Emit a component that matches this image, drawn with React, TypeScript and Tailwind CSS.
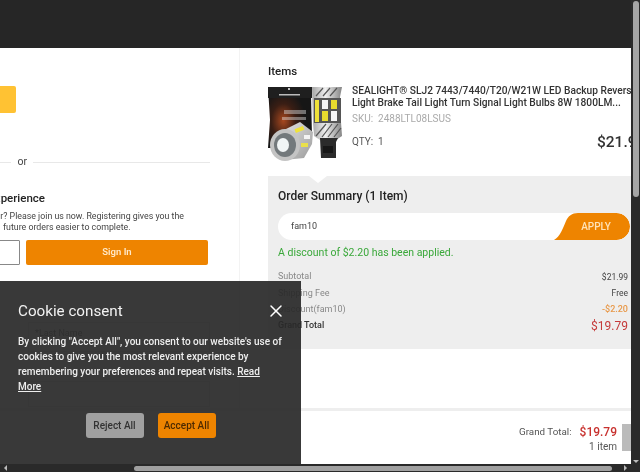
import { X } from "lucide-react";

const F = "font-['Roboto','Noto_Sans',sans-serif]";

function ProductImage() {
  return (
    <svg viewBox="0 0 76 76" className="h-[76px] w-[76px] shrink-0 blur-[0.5px]">
      <defs>
        <linearGradient id="g1" x1="0" y1="0" x2="1" y2="0">
          <stop offset="0" stopColor="#a5a5a5" />
          <stop offset="0.45" stopColor="#efefef" />
          <stop offset="1" stopColor="#858585" />
        </linearGradient>
        <radialGradient id="g2" cx="0.35" cy="0.55" r="0.5">
          <stop offset="0" stopColor="#a8481f" />
          <stop offset="0.55" stopColor="#3a1e14" />
          <stop offset="1" stopColor="#161616" />
        </radialGradient>
        <linearGradient id="g3" x1="0" y1="0" x2="1" y2="1">
          <stop offset="0" stopColor="#e8e8e8" />
          <stop offset="1" stopColor="#9a9a9a" />
        </linearGradient>
      </defs>
      <path d="M0 1 H44 L43 9 L44 50 L4 62 L0 62 L2 34 Z" fill="url(#g2)" />
      <rect x="0" y="1" width="44" height="11" fill="#1f1f1f" />
      <circle cx="21" cy="3" r="1" fill="#fff" />
      <rect x="11" y="8" width="21" height="1.5" fill="#bbb" />
      <rect x="16" y="24" width="22" height="4" fill="#ddd" opacity="0.45" />
      <rect x="14" y="31" width="24" height="3" fill="#ddd" opacity="0.45" />
      <path d="M44 1 H74 L72 11 L73 36 L74 50 L68 54 H52 L46 50 L45 36 Z" fill="url(#g1)" />
      <rect x="46" y="12" width="27" height="25" fill="#555" />
      <rect x="47" y="14" width="4" height="22" fill="#efe23a" />
      <rect x="54" y="14" width="6" height="9" fill="#f4f4f4" />
      <rect x="54" y="25" width="6" height="10" fill="#e8db2e" />
      <rect x="63" y="14" width="6" height="9" fill="#e8db2e" />
      <rect x="63" y="25" width="6" height="10" fill="#f6f6f6" />
      <g stroke="#555" strokeWidth="1.2">
        <path d="M48 50 L58 38" />
        <path d="M54 51 L64 38" />
        <path d="M60 51 L70 38" />
        <path d="M66 51 L73 42" />
        <path d="M48 10 L55 2" />
        <path d="M55 10 L62 2" />
        <path d="M62 10 L69 2" />
      </g>
      <path d="M52 52 H70 L68 56 V72 H53 Z" fill="#2b2b2b" />
      <rect x="55" y="60" width="10" height="7" fill="#171717" />
      <path d="M10 47 L32 36 L45 46 L44 58 L36 72 L16 74 Z" fill="url(#g3)" />
      <rect x="27" y="42" width="9" height="4" fill="#f0e33a" transform="rotate(-20 30 44)" />
      <rect x="36" y="49" width="6" height="4" fill="#f3f3f3" />
      <rect x="33" y="57" width="7" height="4" fill="#e9e04a" />
      <ellipse cx="17" cy="59" rx="15" ry="16" fill="#c4c4c4" />
      <ellipse cx="17" cy="59" rx="11" ry="12" fill="#73797c" />
      <ellipse cx="15" cy="59" rx="6" ry="7" fill="#f1f5f6" />
    </svg>
  );
}

function Row({ label, value, labelCls, valueCls }: { label: string; value: string; labelCls: string; valueCls: string }) {
  return (
    <div className="flex h-[16.3px] items-center justify-between pr-[2px]">
      <span className={labelCls}>{label}</span>
      <span className={valueCls}>{value}</span>
    </div>
  );
}

export default function App() {
  return (
    <div className={`relative flex h-[472px] w-[640px] flex-col overflow-hidden bg-white blur-[0.3px] ${F}`}>
      <div className="flex min-h-0 flex-1">
        <div className="flex w-[631px] flex-col overflow-hidden">
          <header className="h-12 shrink-0 bg-[#262626]" />
          <main className="flex h-[360px] shrink-0">
            <section className="w-[240px] shrink-0 overflow-hidden border-r border-[#f3f3f3]">
              <div className="ml-[-200px] w-[410px]">
                <div className="mt-[38px] h-[27px] w-[216px] rounded-[2px] bg-[#ffc233]" />
                <div className="mt-[42px] flex items-center gap-[6px]">
                  <div className="h-px flex-1 bg-[#e8e8e8]" />
                  <span className="text-[10.5px] leading-[14px] text-[#444]">or</span>
                  <div className="h-px w-[177px] bg-[#e8e8e8]" />
                </div>
                <h3 className="mt-[22px] w-[245px] text-right text-[11.5px] leading-[14px] font-medium text-[#222]">Create an account for a better experience</h3>
                <p className="mt-[6px] pr-[26px] text-right text-[8.8px] leading-[11px] text-[#444]">
                  New customer? Please join us now. Registering gives you the
                </p>
                <p className="pl-[203px] text-[8.8px] leading-[11px] text-[#444]">future orders easier to complete.</p>
                <div className="mt-[7px] flex gap-[6px] pr-[2px]">
                  <button className="h-[25px] flex-1 rounded-[1px] border border-[#888] bg-white" />
                  <button className="h-[25px] w-[182px] rounded-[2px] bg-[#ee8400] text-[9.5px] font-semibold text-[#ffe9c8]">Sign In</button>
                </div>
                <div className="mt-[57px] ml-[228px] h-[30px] w-[182px] border border-[#ddd] pt-[4px] pl-[6px] text-[9px] text-[#777]">*Last Name</div>
                <div className="mt-[29px] ml-[228px] h-[26px] w-[182px] border border-[#ddd]" />
              </div>
            </section>
            <section className="min-w-0 flex-1 pl-[28px]">
              <h2 className="mt-[16px] text-[11.5px] leading-[14px] font-medium text-[#222]">Items</h2>
              <div className="mt-[8px] flex gap-[8px]">
                <ProductImage />
                <div className="min-w-0 flex-1">
                  <div className="mt-[-1px] w-[300px] text-[10.2px] leading-[12.3px] font-medium text-[#333]">
                    <div className="whitespace-nowrap">SEALIGHT® SLJ2 7443/7440/T20/W21W LED Backup Reverse</div>
                    <div className="whitespace-nowrap">Light Brake Tail Light Turn Signal Light Bulbs 8W 1800LM...</div>
                  </div>
                  <div className="mt-[2px] text-[10px] leading-[13px] text-[#aaa]">SKU:&nbsp; 2488LTL08LSUS</div>
                  <div className="mt-[8px] flex items-center justify-between">
                    <span className="text-[10px] text-[#555]">QTY:&nbsp;&nbsp;1</span>
                    <span className="mr-[-12px] w-[46px] overflow-hidden text-[15.5px] leading-[18px] font-medium whitespace-nowrap text-[#333]">$21.99</span>
                  </div>
                </div>
              </div>
              <div className="relative mt-[14px] h-[173px] w-[363px] bg-[#eeeeee] pt-[13px] pr-px pl-[10px]">
                <div className="absolute top-0 left-[41px] h-0 w-0 border-x-[9px] border-t-[7px] border-x-transparent border-t-white" />
                <h2 className="text-[12px] leading-[15px] font-medium text-[#222]">Order Summary (1 Item)</h2>
                <div className="mt-[9px] flex h-[27px] w-[352px] items-center overflow-hidden rounded-full bg-white">
                  <span className="flex-1 pl-[13px] text-[9px] text-[#444]">fam10</span>
                  <svg viewBox="0 0 76 27" className="h-[27px] w-[76px]">
                    <path d="M0 27 C6 24 9 15 12 8 C14 3 18 0 24 0 H62.5 A13.5 13.5 0 0 1 62.5 27 Z" fill="#ee8400" />
                    <text x="42" y="17" textAnchor="middle" fontSize="10" fontWeight="500" fill="#ffe3b8">APPLY</text>
                  </svg>
                </div>
                <div className="mt-[6px] text-[10.5px] leading-[13px] text-[#3aa83a]">A discount of $2.20 has been applied.</div>
                <div className="mt-[10px]">
                  <Row label="Subtotal" value="$21.99" labelCls="text-[9px] text-[#888]" valueCls="text-[8.5px] text-[#444]" />
                  <Row label="Shipping Fee" value="Free" labelCls="text-[9px] text-[#888]" valueCls="text-[8.5px] text-[#444]" />
                  <Row label="Discount(fam10)" value="-$2.20" labelCls="text-[9px] text-[#888]" valueCls="text-[9px] font-medium text-[#e8994a]" />
                  <Row label="Grand Total" value="$19.79" labelCls="text-[9px] font-medium text-[#333]" valueCls="text-[12px] text-[#c53a3a]" />
                </div>
              </div>
            </section>
          </main>
          <footer className="flex h-[56px] shrink-0 items-start justify-end border-t-[3px] border-[#eeeeee] pt-[13px]">
            <div className="flex flex-col items-end">
              <div className="flex items-center gap-[8px]">
                <span className="text-[9.8px] text-[#555]">Grand Total:</span>
                <span className="text-[12px] leading-[16px] font-medium text-[#c8322f]">$19.79</span>
              </div>
              <span className="text-[10px] leading-[13px] text-[#555]">1 item</span>
            </div>
            <div className="ml-[5px] h-[27px] w-[9px] bg-[#bbbbbb]" />
          </footer>
        </div>
        <div className="flex w-[9px] shrink-0 flex-col items-center bg-[#2a2a2a]">
          <div className="mt-[1px] h-[196px] w-[6px] rounded-[3px] bg-[#a5a5a5]" />
          <div className="mt-auto mb-[1px] h-0 w-0 border-x-[3px] border-t-[3px] border-x-transparent border-t-[#bbb]" />
        </div>
      </div>
      <div className="flex h-[8px] shrink-0 items-center bg-[#2a2a2a] pl-[4px]">
        <div className="h-0 w-0 border-y-[3px] border-r-[3px] border-y-transparent border-r-[#bbb]" />
        <div className="ml-[127px] h-[5px] w-[478px] rounded-[3px] bg-[#a0a0a0]" />
        <div className="ml-[12px] h-0 w-0 border-y-[3px] border-l-[3px] border-y-transparent border-l-[#bbb]" />
      </div>

      <div className="absolute top-[281px] left-0 h-[183px] w-[301px] bg-[#282828]/92 px-[18px] pt-[20px]">
        <div className="flex items-center justify-between">
          <h2 className="text-[15.2px] leading-[20px] text-[#f2f2f2]">Cookie consent</h2>
          <X className="mr-[-3px] h-[20px] w-[20px] text-white" strokeWidth={1.8} />
        </div>
        <p className="mt-[13px] w-[265px] text-[10px] leading-[15px] font-medium text-[#eeeeee]">
          By clicking "Accept All", you consent to our website's use of cookies to give you the most relevant experience by remembering your preferences and repeat visits. <span className="underline">Read More</span>
        </p>
        <div className="mt-[19px] flex justify-center gap-[14px]">
          <button className="h-[25px] w-[58px] rounded-[3px] bg-[#a0a0a0] text-[10px] font-medium text-[#333]">Reject All</button>
          <button className="h-[25px] w-[58px] rounded-[3px] bg-[#ee8400] text-[10px] font-medium text-[#4d2a00]">Accept All</button>
        </div>
      </div>
    </div>
  );
}
